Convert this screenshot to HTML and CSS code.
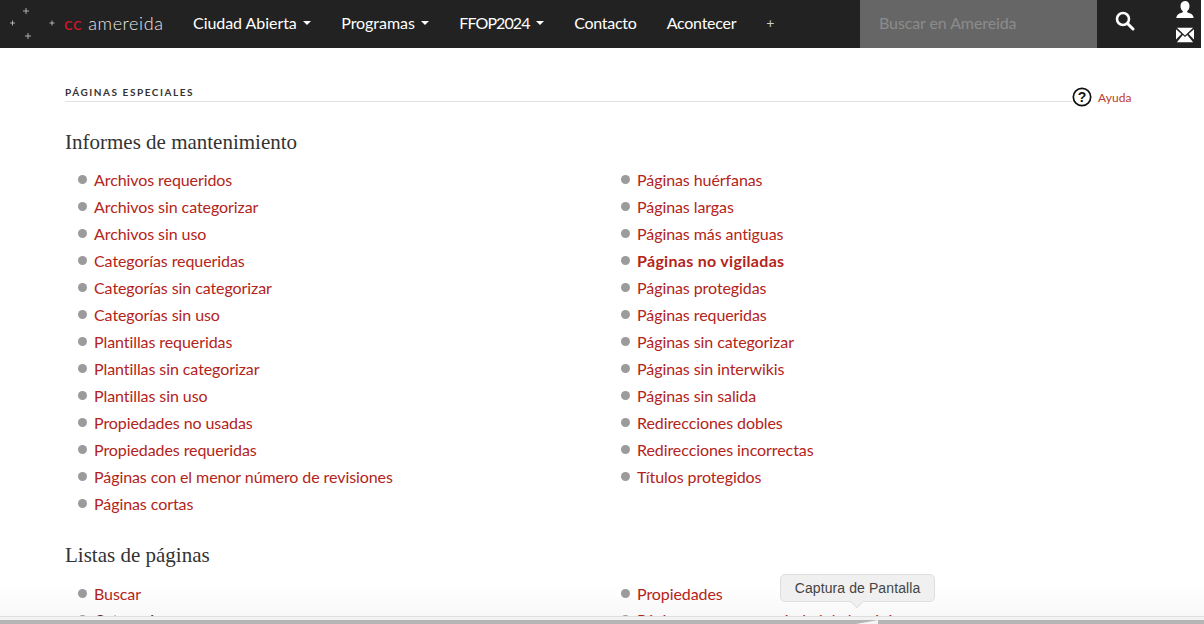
FILE: index.html
```html
<!DOCTYPE html>
<html lang="es">
<head>
<meta charset="utf-8">
<title>Páginas especiales - Amereida</title>
<link rel="stylesheet" href="styles.css">
</head>
<body>
<header class="topbar">
  <a class="brand" href="#">
    <svg class="stars" width="62" height="48" viewBox="0 0 62 48" aria-hidden="true">
      <path d="M26 8v6M23 11h6M12.500 20.500v5M10 23h5M52 20.500v5M49.500 23h5M28 33v6M25 36h6" stroke="#cfcfcf" stroke-width="0.800" fill="none"/>
    </svg>
    <span class="cc">cc</span><span class="brand-name">amereida</span>
  </a>
  <nav class="nav">
    <a href="#">Ciudad Abierta<i class="caret"></i></a>
    <a href="#">Programas<i class="caret"></i></a>
    <a href="#"><span class="tight">FFOP2024</span><i class="caret"></i></a>
    <a href="#"><span class="snug">Contacto</span></a>
    <a href="#"><span class="snug">Acontecer</span></a>
    <a href="#" class="plus">+</a>
  </nav>
  <div class="search">Buscar en Amereida</div>
  <div class="search-btn">
    <svg width="20" height="20" viewBox="0 0 20 20" aria-hidden="true"><circle cx="8" cy="8" r="6" fill="none" stroke="#fff" stroke-width="2.600"/><path d="M12.500 12.500L18 18" stroke="#fff" stroke-width="3" stroke-linecap="round"/></svg>
  </div>
  <div class="user-icons">
    <svg width="18" height="18" viewBox="0 0 20 20" aria-hidden="true"><path d="M10 0c3.300 0 5 2.500 5 5.500 0 2.700-1.100 4.700-2.600 5.800v1.200c2 .9 7 1.700 7.300 6.500H.3c.3-4.800 5.300-5.600 7.300-6.500v-1.200C6.100 10.200 5 8.200 5 5.500 5 2.500 6.700 0 10 0z" fill="#fff"/></svg>
    <svg width="18" height="16" viewBox="0 0 20 16" aria-hidden="true"><path d="M1 0h18L10 8.500zM0 1.500V13l6-6zM20 1.500V13l-6-6zM1 16l6.500-8 2.500 2.300 2.500-2.300 6.500 8z" fill="#fff"/></svg>
  </div>
</header>

<main class="content">
  <div class="title-row">
    <h1 class="page-title">Páginas especiales</h1>
    <a class="help" href="#">
      <svg width="20" height="20" viewBox="0 0 20 20" aria-hidden="true"><circle cx="10" cy="10" r="8.700" fill="#fff" stroke="#111" stroke-width="1.700"/><text x="10" y="14.500" text-anchor="middle" class="help-q">?</text></svg>
      <span>Ayuda</span>
    </a>
  </div>

  <h2 class="section">Informes de mantenimiento</h2>
  <div class="cols">
    <ul>
      <li><a href="#">Archivos requeridos</a></li>
      <li><a href="#">Archivos sin categorizar</a></li>
      <li><a href="#">Archivos sin uso</a></li>
      <li><a href="#">Categorías requeridas</a></li>
      <li><a href="#">Categorías sin categorizar</a></li>
      <li><a href="#">Categorías sin uso</a></li>
      <li><a href="#">Plantillas requeridas</a></li>
      <li><a href="#">Plantillas sin categorizar</a></li>
      <li><a href="#">Plantillas sin uso</a></li>
      <li><a href="#">Propiedades no usadas</a></li>
      <li><a href="#">Propiedades requeridas</a></li>
      <li><a href="#">Páginas con el menor número de revisiones</a></li>
      <li><a href="#">Páginas cortas</a></li>
    </ul>
    <ul>
      <li><a href="#">Páginas huérfanas</a></li>
      <li><a href="#">Páginas largas</a></li>
      <li><a href="#">Páginas más antiguas</a></li>
      <li><a href="#" class="strong">Páginas no vigiladas</a></li>
      <li><a href="#">Páginas protegidas</a></li>
      <li><a href="#">Páginas requeridas</a></li>
      <li><a href="#">Páginas sin categorizar</a></li>
      <li><a href="#">Páginas sin interwikis</a></li>
      <li><a href="#">Páginas sin salida</a></li>
      <li><a href="#">Redirecciones dobles</a></li>
      <li><a href="#">Redirecciones incorrectas</a></li>
      <li><a href="#">Títulos protegidos</a></li>
    </ul>
  </div>

  <h2 class="section section-next">Listas de páginas</h2>
  <div class="cols cols-next">
    <ul>
      <li><a href="#">Buscar</a></li>
      <li><a href="#" class="dark">Categorías</a></li>
    </ul>
    <ul>
      <li><a href="#">Propiedades</a></li>
      <li><a href="#">Páginas con una propiedad de la página</a></li>
    </ul>
  </div>
</main>

<div class="capture-bar"></div>
<div class="tooltip">Captura de Pantalla</div>
</body>
</html>
```
FILE: styles.css
```css
html, body { margin: 0; padding: 0; height: 624px; overflow: hidden; background: #fff; }
body { font-family: "Lato", "Liberation Sans", sans-serif; position: relative; width: 1204px; background: linear-gradient(to bottom, #fff 585px, #f8f8f8 617px); }
a { text-decoration: none; color: inherit; }

.topbar { display: flex; align-items: stretch; height: 48px; width: 1201px; background: #222; color: #fff; }
.brand { display: flex; align-items: center; width: 178px; position: relative; padding: 0 0 2px 64px; box-sizing: border-box; font-size: 18px; letter-spacing: .6px; }
.stars { position: absolute; left: 0; top: 0; }
.cc { color: #d0172c; margin-right: 6px; font-weight: 400; }
.brand-name { color: #e6e6e6; font-weight: 300; }
.nav { display: flex; align-items: center; width: 682px; padding-bottom: 4px; box-sizing: border-box; font-size: 16px; letter-spacing: -.05px; }
.nav a { padding: 0 15px; display: flex; align-items: center; }
.nav .plus { font-size: 14px; color: #ccc; }
.tight { letter-spacing: -.9px; }
.snug { letter-spacing: -.25px; }
.caret { display: inline-block; width: 0; height: 0; margin: 2px 0 0 6.500px; border-top: 4px solid #fff; border-left: 4px solid transparent; border-right: 4px solid transparent; }
.search { width: 237px; background: #666; color: #8c8c8c; font-size: 16px; display: flex; align-items: center; padding: 0 0 4px 19px; box-sizing: border-box; letter-spacing: -.1px; }
.search-btn { width: 57px; display: flex; align-items: center; justify-content: center; padding: 0 2px 6px 0; box-sizing: border-box; }
.user-icons { flex: 1; display: flex; flex-direction: column; align-items: center; gap: 8px; padding: 1px 0 0 15px; box-sizing: border-box; }

.content { padding: 0 72px 0 65px; }
.title-row { position: relative; margin-top: 37px; height: 16px; border-bottom: 1px solid #e2e2e2; width: 1007px; }
.page-title { margin: 0; font-size: 10px; line-height: 14px; font-weight: 700; letter-spacing: 1.550px; text-transform: uppercase; color: #333; }
.help { position: absolute; left: 1007px; top: 2px; display: flex; align-items: center; gap: 6px; font-size: 12px; color: #c0392b; letter-spacing: .1px; }
.help-q { font: 700 14px "Liberation Sans", sans-serif; fill: #111; }

.section { margin: 28px 0 0; font: 400 21px/24px "Liberation Serif", serif; color: #333; }
.section-next { margin-top: 26px; }
.cols { display: grid; grid-template-columns: 543px 543px; margin-top: 12px; }
.cols-next { margin-top: 13px; }
.cols-next li:first-child { height: 26px; }
ul { list-style: none; margin: 0; padding: 0 0 0 13px; }
li { position: relative; height: 27px; line-height: 27px; padding-left: 16px; font-size: 16px; color: #b3241a; letter-spacing: -.08px; white-space: nowrap; }
li::before { content: ""; position: absolute; left: 0; top: 9px; width: 9px; height: 9px; border-radius: 50%; background: #9b9b9b; }
.strong { font-weight: 700; letter-spacing: .3px; }
.dark { color: #5b1c16; }

.capture-bar { position: absolute; left: 0; right: 0; top: 616px; height: 8px; background: linear-gradient(to bottom, #dedede 1px, #f2f2f2 1px, #f2f2f2 4px, #b5b5b5 4px); }
.capture-bar::after { content: ""; position: absolute; left: 856px; top: 4px; width: 22px; height: 4px; background: #f4f4f4; clip-path: polygon(100% 0, 100% 100%, 0 100%); }
.tooltip { position: absolute; left: 780px; top: 574px; width: 155px; height: 28px; box-sizing: border-box; background: #f0f0f0; border: 1px solid #dedede; border-radius: 5px; font: 14px/26px "Liberation Sans", sans-serif; color: #444; text-align: center; letter-spacing: .1px; }
.tooltip::after { content: ""; position: absolute; left: 70px; top: 20px; width: 11px; height: 11px; transform: rotate(45deg) scale(.85); background: #f0f0f0; border-right: 1px solid #dedede; border-bottom: 1px solid #dedede; }
```
